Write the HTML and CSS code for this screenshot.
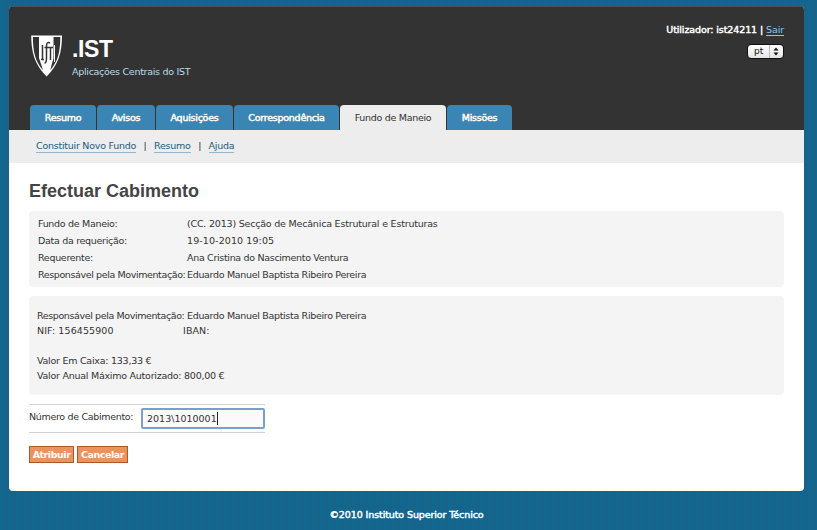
FILE: index.html
```html
<!DOCTYPE html>
<html lang="pt">
<head>
<meta charset="utf-8">
<title>.IST – Efectuar Cabimento</title>
<link rel="stylesheet" href="styles.css">
</head>
<body>
<div class="container">
  <header class="header">
    <div class="masthead">
      <svg class="logo" viewBox="0 0 32 42" width="32" height="42" aria-hidden="true">
        <path d="M.2 .5H31C31 17 27.500 30 15.600 41.500C3.700 30 .2 17 .2 .5Z" fill="#fff"/>
        <path d="M1.900 2H8V23L12 35C4.500 27 1.900 17 1.900 2ZM29.300 2H22.500V23L19.200 35C26.700 27 29.300 17 29.300 2Z" fill="#333"/>
        <path d="M11.500 10V24M10 24.500H13M13.500 28Q15.500 28 15.500 23V11Q15.500 6.500 19 8M13.500 12.500H22M19.500 12.500V25" fill="none" stroke="#333" stroke-width="1.5"/>
        <path d="M23.500 10V27" stroke="#fff"/>
      </svg>
      <div class="brand">
        <h1>.IST</h1>
        <p>Aplicações Centrais do IST</p>
      </div>
      <div class="user">
        <p><span class="semi">Utilizador: ist24211 | </span><a href="#">Sair</a></p>
        <div class="language"><span>pt</span><svg width="14" height="13" viewBox="0 0 14 13"><path d="M.5 0V13" stroke="#bbb"/><path d="M4.500 5.500L7 2.500L9.500 5.500ZM4.500 7.500L7 10.500L9.500 7.500Z" fill="#111"/></svg></div>
      </div>
    </div>
    <nav class="tabs">
      <a class="t1">Resumo</a><a class="t2">Avisos</a><a class="t3">Aquisições</a><a class="t4">Correspondência</a><a class="t5 active">Fundo de Maneio</a><a class="t6">Missões</a>
    </nav>
  </header>
  <nav class="subnav"><a href="#">Constituir Novo Fundo</a><i>|</i><a href="#">Resumo</a><i>|</i><a href="#">Ajuda</a></nav>
  <main class="content">
    <h2>Efectuar Cabimento</h2>
    <dl class="box details">
      <dt>Fundo de Maneio:</dt><dd class="fund">(CC. 2013) Secção de Mecânica Estrutural e Estruturas</dd>
      <dt>Data da requerição:</dt><dd class="number">19-10-2010 19:05</dd>
      <dt>Requerente:</dt><dd>Ana Cristina do Nascimento Ventura</dd>
      <dt class="long">Responsável pela Movimentação:</dt><dd>Eduardo Manuel Baptista Ribeiro Pereira</dd>
    </dl>
    <div class="box funds">
      <div class="row"><span class="wide long">Responsável pela Movimentação:</span><span class="name">Eduardo Manuel Baptista Ribeiro Pereira</span></div>
      <div class="row number"><span class="nif">NIF: 156455900</span><span>IBAN:</span></div>
      <div class="row gap">Valor Em Caixa: 133,33 €</div>
      <div class="row">Valor Anual Máximo Autorizado: 800,00 €</div>
    </div>
    <div class="field"><label>Número de Cabimento:</label><div class="input"><span>2013\1010001</span></div></div>
    <div class="actions"><button class="assign">Atribuir</button><button class="cancel">Cancelar</button></div>
  </main>
</div>
<footer class="semi">©2010 Instituto Superior Técnico</footer>
</body>
</html>
```
FILE: styles.css
```css
* { box-sizing: border-box; }
body {
  margin: 0;
  height: 530px;
  padding: 6px 13px 0 9px;
  overflow: hidden;
  background: repeating-linear-gradient(90deg, #12678f 0 4px, #17638a 4px 8px);
  color: #333;
  font: 9.5px/15px "DejaVu Sans", Verdana, sans-serif;
  letter-spacing: -0.25px;
  white-space: nowrap;
}
h1, h2, p, dl, dd { margin: 0; }
.semi { -webkit-text-stroke: 0.45px currentColor; }
.container { height: 485px; background: #fff; border-radius: 4px; overflow: hidden; }
.header { height: 124px; background: #333; border-top: 1px solid #4c5358; display: flex; flex-direction: column; justify-content: space-between; }
.masthead { display: flex; padding: 0 20px 0 22px; }
.logo { margin-top: 28px; }
.brand { margin: 28px 0 0 9px; }
h1 { font: bold 23px/29px "Liberation Sans", Arial, sans-serif; color: #fff; letter-spacing: -0.4px; }
.brand p { color: #b9dcea; line-height: 16px; letter-spacing: -0.29px; }
.user { margin: 15px 0 0 auto; color: #fff; display: flex; flex-direction: column; align-items: flex-end; letter-spacing: -0.1px; }
.user a { color: #8fc4ea; text-decoration: none; border-bottom: 1px solid #8fc4ea; letter-spacing: -0.1px; }
.language { margin-top: 7px; width: 37px; height: 15px; border: 1px solid #111; border-radius: 4px; background: linear-gradient(#fff, #e4e4e4); color: #111; font-size: 9px; line-height: 12px; display: flex; justify-content: space-between; padding-left: 6px; letter-spacing: 0; }
.tabs { display: flex; gap: 1px; padding-left: 21px; }
.tabs a { height: 25px; line-height: 25px; text-align: center; background: #3a85b3; color: #fff; -webkit-text-stroke: 0.45px #fff; border-radius: 4px 4px 0 0; }
.tabs .active { background: #ededed; color: #333; -webkit-text-stroke: 0; letter-spacing: -0.3px; }
.t1 { width: 66px; }
.t2 { width: 58px; }
.t3 { width: 77px; }
.t4 { width: 105px; }
.t5 { width: 106px; }
.t6 { width: 65px; }
.subnav { height: 33px; background: #ededed; padding: 9px 0 0 27px; display: flex; align-items: flex-start; }
.subnav a { color: #245b80; text-decoration: none; border-bottom: 1px solid #92b5cb; line-height: 13px; }
.subnav i { font-style: normal; width: 18px; text-align: center; line-height: 13px; }
.content { padding: 17px 20px 0; }
h2 { font: bold 18px/22px "Liberation Sans", Arial, sans-serif; color: #444; letter-spacing: 0; }
.box { background: #f4f4f4; border-radius: 4px; }
.details { margin-top: 9px; height: 76px; padding: 4px 9px; display: grid; grid-template-columns: 149px 1fr; grid-auto-rows: 17px; line-height: 17px; }
dt { letter-spacing: -0.3px; }
dd, .name { letter-spacing: -0.32px; }
.fund { letter-spacing: -0.2px; }
.number { letter-spacing: 0.1px; }
.long { letter-spacing: -0.39px; }
.funds { margin-top: 9px; height: 99px; padding: 12px 8px; }
.row { display: flex; }
.gap { margin-top: 15px; }
.wide { width: 150px; }
.nif { width: 146px; }
.field { margin-top: 9px; width: 236px; height: 29px; border: solid #d3d3d3; border-width: 1px 0; display: flex; justify-content: space-between; line-height: 24px; letter-spacing: -0.32px; }
.input { width: 124px; height: 21px; margin-top: 3px; border: 2px solid #779fcf; border-radius: 2px; background: #fbf9fa; padding-left: 4px; line-height: 18px; letter-spacing: 0; }
.input span { display: inline-block; height: 13px; line-height: 14px; border-right: 1px solid #222; }
.actions { margin-top: 13px; display: flex; gap: 3px; }
button { height: 17px; padding: 0; text-align: center; border: 1px solid #a65a2c; background: #e99362; color: #fff; font: bold 9.5px/14px "DejaVu Sans", Verdana, sans-serif; letter-spacing: -0.45px; }
.assign { width: 45px; }
.cancel { width: 51px; }
footer { margin-top: 16px; text-align: center; color: #fff; letter-spacing: -0.1px; }
```
